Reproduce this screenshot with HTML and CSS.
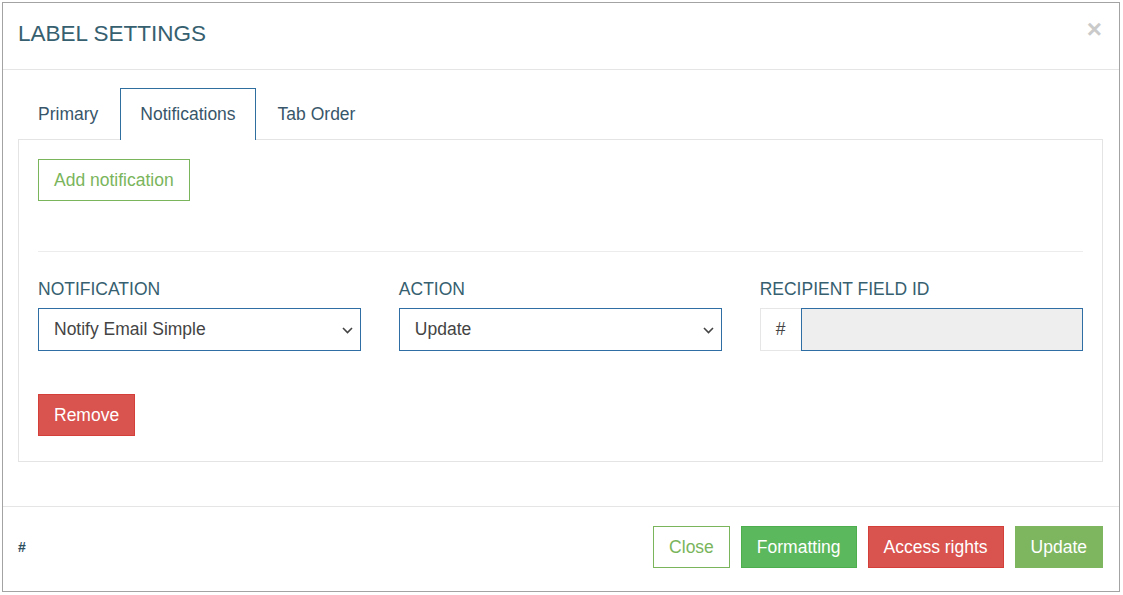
FILE: index.html
```html
<!DOCTYPE html>
<html>
<head>
<meta charset="utf-8">
<title>Label settings</title>
<link rel="stylesheet" href="styles.css">
</head>
<body>
<div class="modal">
  <div class="modal-header">
    <h4 class="modal-title">LABEL SETTINGS</h4>
    <button class="close" type="button">×</button>
  </div>
  <div class="modal-body">
    <ul class="tabs">
      <li class="tab">Primary</li>
      <li class="tab active">Notifications</li>
      <li class="tab">Tab Order</li>
    </ul>
    <div class="pane">
      <button class="btn btn-outline" type="button">Add notification</button>
      <hr class="sep">
      <div class="fields">
        <div class="field">
          <label class="field-label">NOTIFICATION</label>
          <div class="select"><span>Notify Email Simple</span><svg class="chev" width="11" height="7" viewBox="0 0 11 7"><polyline points="1,1 5.5,5.5 10,1" fill="none" stroke="#444" stroke-width="1.6"/></svg></div>
        </div>
        <div class="field">
          <label class="field-label">ACTION</label>
          <div class="select"><span>Update</span><svg class="chev" width="11" height="7" viewBox="0 0 11 7"><polyline points="1,1 5.5,5.5 10,1" fill="none" stroke="#444" stroke-width="1.6"/></svg></div>
        </div>
        <div class="field">
          <label class="field-label">RECIPIENT FIELD ID</label>
          <div class="input-group"><span class="addon">#</span><span class="input"></span></div>
        </div>
      </div>
      <button class="btn btn-danger" type="button">Remove</button>
    </div>
  </div>
  <div class="modal-footer">
    <span class="hash">#</span>
    <div class="actions">
      <button class="btn btn-outline" type="button">Close</button>
      <button class="btn btn-success" type="button">Formatting</button>
      <button class="btn btn-danger" type="button">Access rights</button>
      <button class="btn btn-update" type="button">Update</button>
    </div>
  </div>
</div>
</body>
</html>
```
FILE: styles.css
```css
* { box-sizing: border-box; }
html, body { margin: 0; padding: 0; background: #fff; }
body {
  font-family: "Liberation Sans", Arial, sans-serif;
  font-size: 17.5px;
  line-height: 25px;
  color: #444;
}
.modal {
  margin: 2px 0 0 2px;
  width: 1118px;
  height: 590px;
  border: 1px solid #a3a3a3;
  display: flex;
  flex-direction: column;
  background: #fff;
}
.modal-header {
  height: 67px;
  border-bottom: 1px solid #e5e5e5;
  padding: 18.5px 17px 0 15px;
  display: flex;
  align-items: flex-start;
}
.modal-title {
  margin: 0;
  font-size: 22.5px;
  line-height: 24.75px;
  font-weight: normal;
  color: #36606f;
}
.close {
  margin-left: auto;
  margin-top: -6px;
  padding: 0;
  border: 0;
  background: none;
  font-family: "Liberation Sans", Arial, sans-serif;
  font-weight: 700;
  font-size: 26px;
  line-height: 26px;
  color: #cacaca;
}
.modal-body {
  padding: 18px 16px 44px 15px;
}
.tabs {
  list-style: none;
  margin: 0;
  padding: 0;
  display: flex;
  align-items: flex-start;
}
.tab {
  padding: 12.5px 19px;
  border: 1px solid transparent;
  border-bottom: 0;
  margin-right: 2px;
  color: #38566a;
  line-height: 25px;
}
.tab.active {
  border-color: #2f6f9f;
  background: #fff;
  padding-bottom: 13.5px;
  margin-bottom: -1px;
  position: relative;
  z-index: 1;
}
.pane {
  border: 1px solid #e4e4e4;
  padding: 19px 19px 25px;
}
.sep {
  margin: 50px 0 0;
  border: 0;
  border-top: 1px solid #ececec;
  height: 0;
}
.fields {
  display: grid;
  grid-template-columns: repeat(3, 1fr);
  column-gap: 37.5px;
  margin-top: 25px;
  margin-bottom: 43px;
}
.field-label {
  display: block;
  margin-bottom: 6px;
  color: #36606f;
  line-height: 25px;
}
.select {
  height: 43px;
  border: 1px solid #2f6ea5;
  display: flex;
  align-items: center;
  justify-content: space-between;
  padding: 0 7px 0 15px;
  color: #444;
}
.chev { display: block; margin-top: 1px; }
.input-group {
  display: flex;
  height: 43px;
}
.addon {
  width: 41px;
  border: 1px solid #e6e6e6;
  border-right: 0;
  display: flex;
  align-items: center;
  justify-content: center;
  color: #444;
}
.input {
  flex: 1;
  background: #eee;
  border: 1px solid #2f6ea5;
}
.btn {
  height: 42px;
  padding: 7.5px 15px;
  border: 1px solid transparent;
  font-family: "Liberation Sans", Arial, sans-serif;
  font-size: 17.5px;
  line-height: 25px;
  display: block;
  background: #fff;
  color: #fff;
}
.btn-outline {
  border-color: #7ab55c;
  color: #7ab55c;
  background: #fff;
}
.btn-danger {
  background: #d9534f;
  border-color: #d43f3a;
}
.btn-success {
  background: #5cb85c;
  border-color: #4cae4c;
}
.btn-update {
  background: #7db65f;
  border-color: #7db65f;
}
.modal-footer {
  border-top: 1px solid #e5e5e5;
  padding: 19px 16px 23px 15px;
  display: flex;
  align-items: center;
  justify-content: space-between;
  flex: 1;
}
.hash {
  font-size: 14px;
  font-weight: 700;
  color: #2f4f5f;
}
.actions {
  display: flex;
  gap: 11px;
}
```
